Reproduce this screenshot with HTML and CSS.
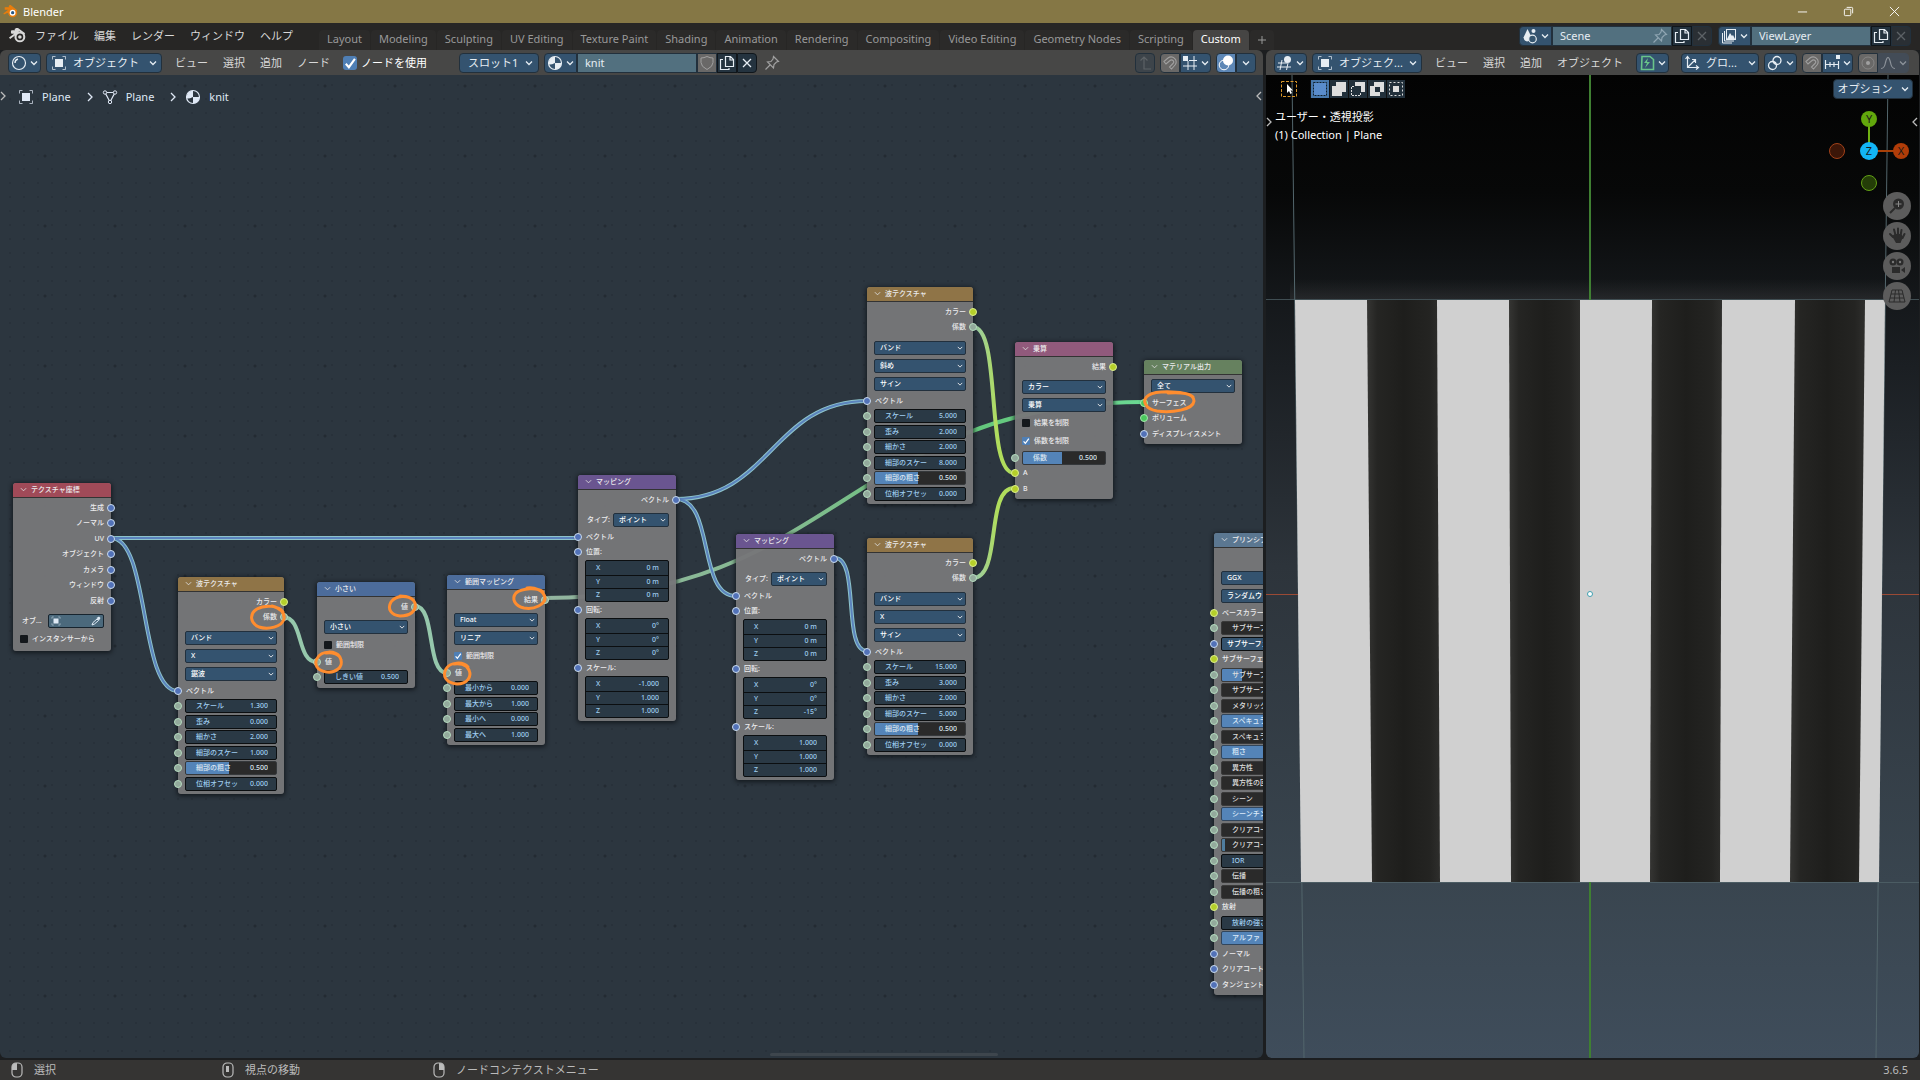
FILE: index.html
```html
<!DOCTYPE html>
<html lang="ja">
  <head>
    <meta charset="UTF-8" />
    <meta name="viewport" content="width=device-width, initial-scale=1.0" />
    <title>Blender</title>
    <link rel="stylesheet" href="styles.css">
  </head>
  <body>
    <svg class="defs" width="0" height="0">
      <symbol id="i-logo" viewBox="0 0 20 16"><path d="M1 11 L9 5 H3.500 V3.500 H10 L7.500 1.500 L9 .5 L17 6.500" fill="none" stroke="currentColor" stroke-width="2" stroke-linejoin="round"/><circle cx="12" cy="9.500" r="4.700" fill="none" stroke="currentColor" stroke-width="2.200"/><circle cx="12" cy="9.500" r="1.900" fill="currentColor"/></symbol>
      <symbol id="i-object" viewBox="0 0 16 16"><path d="M4.500 1.500h-3v3M11.500 1.500h3v3M4.500 14.500h-3v-3M11.500 14.500h3v-3" fill="none" stroke="currentColor" opacity=".7"/><rect x="4" y="4" width="8" height="8" fill="currentColor"/></symbol>
      <symbol id="i-sphere" viewBox="0 0 16 16"><circle cx="8" cy="8" r="6.500" fill="none" stroke="currentColor" stroke-width="1.200"/><path d="M4 8a4 4 0 0 1 3-4" fill="none" stroke="currentColor" stroke-width="1.400"/></symbol>
      <symbol id="i-material" viewBox="0 0 16 16"><circle cx="8" cy="8" r="6.500" fill="none" stroke="currentColor" stroke-width="1.200"/><path d="M8 1.500a6.500 6.500 0 0 0-6 8q2 .5 6-1.500zM8 8h6.500a6.500 6.500 0 0 1-6.500 6.500z" fill="currentColor"/></symbol>
      <symbol id="i-mesh" viewBox="0 0 16 16"><path d="M3 3.500h10L8 13z" fill="none" stroke="currentColor" stroke-width="1.200"/><g fill="#2c353e" stroke="currentColor"><circle cx="3" cy="3.500" r="1.700"/><circle cx="13" cy="3.500" r="1.700"/><circle cx="8" cy="13" r="1.700"/></g></symbol>
      <symbol id="i-chev" viewBox="0 0 8 8"><path d="M1 2.500l3 3 3-3" fill="none" stroke="currentColor" stroke-width="1.300"/></symbol>
      <symbol id="i-right" viewBox="0 0 8 12"><path d="M2 2l4 4-4 4" fill="none" stroke="currentColor" stroke-width="1.300"/></symbol>
      <symbol id="i-shield" viewBox="0 0 16 16"><path d="M8 1.500q3 1.500 6 1.500v4.500q0 4-6 7-6-3-6-7V3q3 0 6-1.500z" fill="none" stroke="currentColor"/></symbol>
      <symbol id="i-copy" viewBox="0 0 16 16"><path d="M6.500 1.500h5l3 3v7h-8zM11 1.500V5h3.500" fill="none" stroke="currentColor" stroke-width="1.200"/><path d="M4 4.500H1.500v10h8.500V13" fill="none" stroke="currentColor" stroke-width="1.200"/></symbol>
      <symbol id="i-x" viewBox="0 0 16 16"><path d="M4 4l8 8M12 4l-8 8" stroke="currentColor" stroke-width="1.300"/></symbol>
      <symbol id="i-pin" viewBox="0 0 16 16"><path d="M9.500 1.500l5 5-2 .5-2.500 2.500-.5 3.500-6-6 3.500-.5L9 4zM6 10l-4.500 4.500" fill="none" stroke="currentColor" stroke-width="1.200"/></symbol>
      <symbol id="i-parent" viewBox="0 0 16 16"><path d="M14 14H7V2M3.500 5.500L7 2l3.500 3.500" fill="none" stroke="currentColor" stroke-width="1.200"/></symbol>
      <symbol id="i-magnet" viewBox="0 0 16 16"><path d="M2 6.500L6 3a5 5 0 0 1 7 7l-3.500 4-2-2L11 8.500a2 2 0 0 0-3-3L4 9z" fill="none" stroke="currentColor" stroke-width="1.100"/></symbol>
      <symbol id="i-snapgrid" viewBox="0 0 16 16"><path d="M6 6v9M12 1v14M1 11h14M7 5.500h8" stroke="currentColor"/><rect x="1" y="1" width="5" height="5" fill="currentColor"/></symbol>
      <symbol id="i-overlay" viewBox="0 0 16 16"><circle cx="10" cy="5.500" r="5" fill="currentColor"/><circle cx="6" cy="10" r="4.800" fill="none" stroke="currentColor"/></symbol>
      <symbol id="i-scene" viewBox="0 0 16 16"><path d="M5.500 1l4 8q-.5 4-4.500 4.500-3-.5-3.500-4z" fill="currentColor"/><circle cx="11.500" cy="3" r="2" fill="currentColor"/><circle cx="10.500" cy="11" r="3.800" fill="#35556f" stroke="currentColor" stroke-width="1.200"/></symbol>
      <symbol id="i-layers" viewBox="0 0 16 16"><path d="M1.500 5v10H11M3.500 3v10H13" fill="none" stroke="currentColor"/><rect x="5.500" y="1.500" width="9" height="10" fill="none" stroke="currentColor"/><path d="M6 11l3-6 2 3 1-1 2 4z" fill="currentColor"/></symbol>
      <symbol id="i-view3d" viewBox="0 0 16 16"><path d="M1 8h9M0 12h14M5 5L3 15M11 8l-1.500 7" stroke="currentColor"/><circle cx="10.500" cy="4.500" r="3.500" fill="currentColor"/></symbol>
      <symbol id="i-pivot" viewBox="0 0 16 16"><path d="M3 1.500h8l3.500 3v10h-12z" fill="none" stroke="#69c48a" stroke-width="1.600"/><path d="M9 3L5 8h3l-2 5 5-6H8z" fill="#69c48a"/></symbol>
      <symbol id="i-axes" viewBox="0 0 16 16"><path d="M3.500 2v10.500H14M3.500 12.500L11 5M1.500 4l2-2.500 2 2.500M8 4.500h3.500V8M12 10.500l2.500 2-2.500 2" fill="none" stroke="currentColor" stroke-width="1.200"/></symbol>
      <symbol id="i-link" viewBox="0 0 16 16"><circle cx="10" cy="5.500" r="4" fill="none" stroke="currentColor" stroke-width="1.300"/><circle cx="5.500" cy="10.500" r="4" fill="none" stroke="currentColor" stroke-width="1.300"/><circle cx="8" cy="8" r="1.300" fill="currentColor"/></symbol>
      <symbol id="i-incr" viewBox="0 0 16 16"><path d="M1.500 5v9M6 7v5M10 7v5M14.500 6v8M1.500 9.500h13" stroke="currentColor" stroke-width="1.200"/><rect x="12" y="0" width="4" height="4" fill="currentColor"/></symbol>
      <symbol id="i-prop" viewBox="0 0 16 16"><circle cx="8" cy="8" r="6" fill="none" stroke="currentColor" opacity=".5"/><circle cx="8" cy="8" r="2" fill="currentColor"/></symbol>
      <symbol id="i-curve" viewBox="0 0 16 16"><path d="M1 13.500q3.500 0 4.500-6 2.500-10 5 0 1 6 4.500 6" fill="none" stroke="currentColor" stroke-width="1.200"/></symbol>
      <symbol id="i-mouse" viewBox="0 0 12 16"><rect x="1" y="1" width="10" height="14" rx="4" fill="none" stroke="currentColor" stroke-width="1.200"/></symbol>
      <symbol id="i-drop" viewBox="0 0 10 10"><path d="M1 9l1-2.500L6 3l1.500 1.500L3.500 8z" fill="none" stroke="currentColor"/><path d="M5.500 2l2.500 2.500 1.500-2.500-1.500-1.500z" fill="currentColor"/></symbol>
    </svg>

    <div class="titlebar">
      <svg class="logo" viewBox="0 0 20 16"><path d="M1 11L9 5H3V3.500h7L8 1.500 9 .5l8 6.500" fill="#e87d0d" stroke="#e87d0d" stroke-width="1.500"/><circle cx="12" cy="9.500" r="5.500" fill="#e87d0d"/><circle cx="12" cy="9.500" r="3.600" fill="#fff"/><circle cx="12" cy="9.500" r="2" fill="#265787"/></svg>
      <span class="title">Blender</span>
      <button class="win" aria-label="minimize"><svg viewBox="0 0 12 12"><path d="M1 6.500h10" stroke="#fff"/></svg></button>
      <button class="win" aria-label="restore"><svg viewBox="0 0 12 12"><rect x="1.500" y="3.500" width="7" height="7" rx="1" fill="none" stroke="#fff"/><path d="M4 1.500h5.500q1 0 1 1V8" fill="none" stroke="#fff"/></svg></button>
      <button class="win" aria-label="close"><svg viewBox="0 0 12 12"><path d="M1 1l10 10M11 1L1 11" stroke="#fff"/></svg></button>
    </div>

    <div class="topbar">
      <svg class="applogo"><use href="#i-logo"/></svg>
      <nav class="menu">
        <a href="#">ファイル</a><a href="#">編集</a><a href="#">レンダー</a><a href="#">ウィンドウ</a><a href="#">ヘルプ</a>
      </nav>
      <nav class="tabs">
        <a href="#">Layout</a><a href="#">Modeling</a><a href="#">Sculpting</a><a href="#">UV Editing</a><a href="#">Texture Paint</a><a href="#">Shading</a><a href="#">Animation</a><a href="#">Rendering</a><a href="#">Compositing</a><a href="#">Video Editing</a><a href="#">Geometry Nodes</a><a href="#">Scripting</a><a href="#" class="active">Custom</a><a href="#" class="add" aria-label="add workspace"><svg viewBox="0 0 8 8"><path d="M4 0v8M0 4h8" stroke="currentColor"/></svg></a>
      </nav>
      <div class="group scene">
        <button class="btn" aria-label="scene"><svg class="ic"><use href="#i-scene"/></svg><svg class="ch"><use href="#i-chev"/></svg></button>
        <input class="name" aria-label="scene name" value="Scene" />
        <svg class="ic inpin"><use href="#i-pin"/></svg>
        <button class="btn dark" aria-label="new scene"><svg class="ic"><use href="#i-copy"/></svg></button>
        <button class="btn off" aria-label="delete scene"><svg class="ic"><use href="#i-x"/></svg></button>
      </div>
      <div class="group scene">
        <button class="btn" aria-label="layer"><svg class="ic"><use href="#i-layers"/></svg><svg class="ch"><use href="#i-chev"/></svg></button>
        <input class="name" aria-label="layer name" value="ViewLayer" />
        <button class="btn dark" aria-label="new layer"><svg class="ic"><use href="#i-copy"/></svg></button>
        <button class="btn off" aria-label="delete layer"><svg class="ic"><use href="#i-x"/></svg></button>
      </div>
    </div>

    <div class="workspace">
      <section class="editor">
        <div class="header">
          <button class="btn" aria-label="editor"><svg class="ic"><use href="#i-sphere"/></svg><svg class="ch"><use href="#i-chev"/></svg></button>
          <button class="btn mode"><svg class="ic"><use href="#i-object"/></svg><span>オブジェクト</span><svg class="ch"><use href="#i-chev"/></svg></button>
          <nav class="menu">
            <a href="#">ビュー</a><a href="#">選択</a><a href="#">追加</a><a href="#">ノード</a>
          </nav>
          <label class="usenodes"><input type="checkbox" class="check" checked />ノードを使用</label>
          <button class="btn slot"><span>スロット1</span><svg class="ch"><use href="#i-chev"/></svg></button>
          <div class="group">
            <button class="btn" aria-label="material"><svg class="ic"><use href="#i-material"/></svg><svg class="ch"><use href="#i-chev"/></svg></button>
            <input class="name" aria-label="material name" value="knit" />
            <button class="btn grey" aria-label="fake user"><svg class="ic"><use href="#i-shield"/></svg></button>
            <button class="btn dark" aria-label="new material"><svg class="ic"><use href="#i-copy"/></svg></button>
            <button class="btn dark" aria-label="unlink"><svg class="ic"><use href="#i-x"/></svg></button>
          </div>
          <svg class="ic dim"><use href="#i-pin"/></svg>
          <div class="right">
            <button class="btn off" aria-label="parent"><svg class="ic"><use href="#i-parent"/></svg></button>
            <div class="group">
              <button class="btn grey" aria-label="snap"><svg class="ic"><use href="#i-magnet"/></svg></button>
              <button class="btn" aria-label="snap to"><svg class="ic"><use href="#i-snapgrid"/></svg><svg class="ch"><use href="#i-chev"/></svg></button>
            </div>
            <div class="group">
              <button class="btn lit" aria-label="overlays"><svg class="ic"><use href="#i-overlay"/></svg></button>
              <button class="btn more" aria-label="overlay options"><svg class="ch"><use href="#i-chev"/></svg></button>
            </div>
          </div>
        </div>

        <div class="canvas">
          <svg class="links">
            <defs>
              <linearGradient id="g-mix" gradientUnits="userSpaceOnUse" x1="973" y1="0" x2="1014" y2="0"><stop offset="0" stop-color="#98c9ae"/><stop offset=".6" stop-color="#b0dd5c"/></linearGradient>
              <linearGradient id="g-out" gradientUnits="userSpaceOnUse" x1="545" y1="0" x2="1143" y2="0"><stop offset="0" stop-color="#93b5a0"/><stop offset=".4" stop-color="#84ba90"/><stop offset=".7" stop-color="#63c57a"/><stop offset="1" stop-color="#6bd892"/></linearGradient>
            </defs>
            <g transform="translate(0 -75)" fill="none">
              <path class="out" d="M545 598C835 598 853 402 1143 402"/>
              <g class="edge">
                <path d="M111 538H577"/>
                <path d="M111 538C150 538 139 691 178 691"/>
                <path d="M676 499C770 499 773 401 867 401"/>
                <path d="M676 499C715 499 697 596 736 596"/>
                <path d="M835 558C860 558 842 651 867 651"/>
              </g>
              <g class="core">
                <path d="M111 538H577"/>
                <path d="M111 538C150 538 139 691 178 691"/>
                <path d="M676 499C770 499 773 401 867 401"/>
                <path d="M676 499C715 499 697 596 736 596"/>
                <path d="M835 558C860 558 842 651 867 651"/>
              </g>
              <g class="float">
                <path d="M283 617C304 617 296 662 317 662"/>
                <path d="M415 606C436 606 426 673 447 673"/>
              </g>
              <g class="mix">
                <path d="M973 327C1002 327 985 473 1014 473"/>
                <path d="M973 578C1002 578 985 488 1014 488"/>
              </g>
            </g>
          </svg>

          <div class="crumbs">
            <svg class="ic"><use href="#i-object"/></svg><span>Plane</span><svg class="sep"><use href="#i-right"/></svg>
            <svg class="ic"><use href="#i-mesh"/></svg><span>Plane</span><svg class="sep"><use href="#i-right"/></svg>
            <svg class="ic"><use href="#i-material"/></svg><span>knit</span>
          </div>

          <div class="node input" id="texcoord">
            <h2>テクスチャ座標</h2>
            <div class="rows">
              <div class="row out">生成<i class="sock vec"></i></div>
              <div class="row out">ノーマル<i class="sock vec"></i></div>
              <div class="row out">UV<i class="sock vec"></i></div>
              <div class="row out">オブジェクト<i class="sock vec"></i></div>
              <div class="row out">カメラ<i class="sock vec"></i></div>
              <div class="row out">ウィンドウ<i class="sock vec"></i></div>
              <div class="row out">反射<i class="sock vec"></i></div>
            </div>
            <div class="picks">
              <div class="pick split"><span>オブ...</span><button class="picker" aria-label="object"><svg><use href="#i-object"/></svg><svg><use href="#i-drop"/></svg></button></div>
              <label class="pick"><input type="checkbox" class="check" />インスタンサーから</label>
            </div>
          </div>

          <div class="node texture" id="wave1">
            <h2>波テクスチャ</h2>
            <div class="rows">
              <div class="row out">カラー<i class="sock color"></i></div>
              <div class="row out">係数<i class="sock float"></i></div>
            </div>
            <div class="picks">
              <div class="pick"><select aria-label="type"><option>バンド</option></select></div>
              <div class="pick"><select aria-label="direction"><option>X</option></select></div>
              <div class="pick"><select aria-label="profile"><option>鋸波</option></select></div>
            </div>
            <div class="rows">
              <div class="row"><i class="sock vec"></i>ベクトル</div>
              <div class="row"><i class="sock float"></i><label class="field"><span>スケール</span><input value="1.300" /></label></div>
              <div class="row"><i class="sock float"></i><label class="field"><span>歪み</span><input value="0.000" /></label></div>
              <div class="row"><i class="sock float"></i><label class="field"><span>細かさ</span><input value="2.000" /></label></div>
              <div class="row"><i class="sock float"></i><label class="field"><span>細部のスケー</span><input value="1.000" /></label></div>
              <div class="row"><i class="sock float"></i><label class="field slider"><span>細部の粗さ</span><input value="0.500" /></label></div>
              <div class="row"><i class="sock float"></i><label class="field"><span>位相オフセッ</span><input value="0.000" /></label></div>
            </div>
          </div>

          <div class="node convert" id="less">
            <h2>小さい</h2>
            <div class="rows">
              <div class="row out">値<i class="sock float"></i></div>
            </div>
            <div class="picks">
              <div class="pick"><select aria-label="operation"><option>小さい</option></select></div>
              <label class="pick"><input type="checkbox" class="check" />範囲制限</label>
            </div>
            <div class="rows">
              <div class="row"><i class="sock float"></i>値</div>
              <div class="row"><i class="sock float"></i><label class="field"><span>しきい値</span><input value="0.500" /></label></div>
            </div>
          </div>

          <div class="node convert" id="maprange">
            <h2>範囲マッピング</h2>
            <div class="rows">
              <div class="row out">結果<i class="sock float"></i></div>
            </div>
            <div class="picks">
              <div class="pick"><select aria-label="data type"><option>Float</option></select></div>
              <div class="pick"><select aria-label="interpolation"><option>リニア</option></select></div>
              <label class="pick"><input type="checkbox" class="check" checked />範囲制限</label>
            </div>
            <div class="rows">
              <div class="row"><i class="sock float"></i>値</div>
              <div class="row"><i class="sock float"></i><label class="field"><span>最小から</span><input value="0.000" /></label></div>
              <div class="row"><i class="sock float"></i><label class="field"><span>最大から</span><input value="1.000" /></label></div>
              <div class="row"><i class="sock float"></i><label class="field"><span>最小へ</span><input value="0.000" /></label></div>
              <div class="row"><i class="sock float"></i><label class="field"><span>最大へ</span><input value="1.000" /></label></div>
            </div>
          </div>

          <div class="node vector" id="mapping1">
            <h2>マッピング</h2>
            <div class="rows">
              <div class="row out">ベクトル<i class="sock vec"></i></div>
            </div>
            <div class="picks">
              <label class="pick split"><span>タイプ:</span><select><option>ポイント</option></select></label>
            </div>
            <div class="rows">
              <div class="row"><i class="sock vec"></i>ベクトル</div>
              <div class="row"><i class="sock vec"></i>位置:</div>
            </div>
            <div class="xyz">
              <label><span>X</span><input value="0 m" /></label>
              <label><span>Y</span><input value="0 m" /></label>
              <label><span>Z</span><input value="0 m" /></label>
            </div>
            <div class="row"><i class="sock vec"></i>回転:</div>
            <div class="xyz">
              <label><span>X</span><input value="0°" /></label>
              <label><span>Y</span><input value="0°" /></label>
              <label><span>Z</span><input value="0°" /></label>
            </div>
            <div class="row"><i class="sock vec"></i>スケール:</div>
            <div class="xyz">
              <label><span>X</span><input value="-1.000" /></label>
              <label><span>Y</span><input value="1.000" /></label>
              <label><span>Z</span><input value="1.000" /></label>
            </div>
          </div>

          <div class="node vector" id="mapping2">
            <h2>マッピング</h2>
            <div class="rows">
              <div class="row out">ベクトル<i class="sock vec"></i></div>
            </div>
            <div class="picks">
              <label class="pick split"><span>タイプ:</span><select><option>ポイント</option></select></label>
            </div>
            <div class="rows">
              <div class="row"><i class="sock vec"></i>ベクトル</div>
              <div class="row"><i class="sock vec"></i>位置:</div>
            </div>
            <div class="xyz">
              <label><span>X</span><input value="0 m" /></label>
              <label><span>Y</span><input value="0 m" /></label>
              <label><span>Z</span><input value="0 m" /></label>
            </div>
            <div class="row"><i class="sock vec"></i>回転:</div>
            <div class="xyz">
              <label><span>X</span><input value="0°" /></label>
              <label><span>Y</span><input value="0°" /></label>
              <label><span>Z</span><input value="-15°" /></label>
            </div>
            <div class="row"><i class="sock vec"></i>スケール:</div>
            <div class="xyz">
              <label><span>X</span><input value="1.000" /></label>
              <label><span>Y</span><input value="1.000" /></label>
              <label><span>Z</span><input value="1.000" /></label>
            </div>
          </div>

          <div class="node texture" id="wave2">
            <h2>波テクスチャ</h2>
            <div class="rows">
              <div class="row out">カラー<i class="sock color"></i></div>
              <div class="row out">係数<i class="sock float"></i></div>
            </div>
            <div class="picks">
              <div class="pick"><select aria-label="type"><option>バンド</option></select></div>
              <div class="pick"><select aria-label="direction"><option>斜め</option></select></div>
              <div class="pick"><select aria-label="profile"><option>サイン</option></select></div>
            </div>
            <div class="rows">
              <div class="row"><i class="sock vec"></i>ベクトル</div>
              <div class="row"><i class="sock float"></i><label class="field"><span>スケール</span><input value="5.000" /></label></div>
              <div class="row"><i class="sock float"></i><label class="field"><span>歪み</span><input value="2.000" /></label></div>
              <div class="row"><i class="sock float"></i><label class="field"><span>細かさ</span><input value="2.000" /></label></div>
              <div class="row"><i class="sock float"></i><label class="field"><span>細部のスケー</span><input value="8.000" /></label></div>
              <div class="row"><i class="sock float"></i><label class="field slider"><span>細部の粗さ</span><input value="0.500" /></label></div>
              <div class="row"><i class="sock float"></i><label class="field"><span>位相オフセッ</span><input value="0.000" /></label></div>
            </div>
          </div>

          <div class="node texture" id="wave3">
            <h2>波テクスチャ</h2>
            <div class="rows">
              <div class="row out">カラー<i class="sock color"></i></div>
              <div class="row out">係数<i class="sock float"></i></div>
            </div>
            <div class="picks">
              <div class="pick"><select aria-label="type"><option>バンド</option></select></div>
              <div class="pick"><select aria-label="direction"><option>X</option></select></div>
              <div class="pick"><select aria-label="profile"><option>サイン</option></select></div>
            </div>
            <div class="rows">
              <div class="row"><i class="sock vec"></i>ベクトル</div>
              <div class="row"><i class="sock float"></i><label class="field"><span>スケール</span><input value="15.000" /></label></div>
              <div class="row"><i class="sock float"></i><label class="field"><span>歪み</span><input value="3.000" /></label></div>
              <div class="row"><i class="sock float"></i><label class="field"><span>細かさ</span><input value="2.000" /></label></div>
              <div class="row"><i class="sock float"></i><label class="field"><span>細部のスケー</span><input value="5.000" /></label></div>
              <div class="row"><i class="sock float"></i><label class="field slider"><span>細部の粗さ</span><input value="0.500" /></label></div>
              <div class="row"><i class="sock float"></i><label class="field"><span>位相オフセッ</span><input value="0.000" /></label></div>
            </div>
          </div>

          <div class="node mixer" id="multiply">
            <h2>乗算</h2>
            <div class="rows">
              <div class="row out">結果<i class="sock color"></i></div>
            </div>
            <div class="picks">
              <div class="pick"><select aria-label="data type"><option>カラー</option></select></div>
              <div class="pick"><select aria-label="blend"><option>乗算</option></select></div>
              <label class="pick"><input type="checkbox" class="check" />結果を制限</label>
              <label class="pick"><input type="checkbox" class="check" checked />係数を制限</label>
            </div>
            <div class="rows">
              <div class="row"><i class="sock float"></i><label class="field slider"><span>係数</span><input value="0.500" /></label></div>
              <div class="row"><i class="sock color"></i>A</div>
              <div class="row"><i class="sock color"></i>B</div>
            </div>
          </div>

          <div class="node output" id="material">
            <h2>マテリアル出力</h2>
            <div class="pick"><select aria-label="target"><option>全て</option></select></div>
            <div class="rows">
              <div class="row"><i class="sock shader"></i>サーフェス</div>
              <div class="row"><i class="sock shader"></i>ボリューム</div>
              <div class="row"><i class="sock vec"></i>ディスプレイスメント</div>
            </div>
          </div>

          <div class="node shading" id="principled">
            <h2>プリンシプル</h2>
            <div class="rows"><div class="row"></div></div>
            <div class="picks">
              <div class="pick"><select aria-label="distribution"><option>GGX</option></select></div>
              <div class="pick"><select aria-label="subsurface method"><option>ランダムウォーク</option></select></div>
            </div>
            <div class="rows">
              <div class="row"><i class="sock color"></i>ベースカラー</div>
              <div class="row"><i class="sock float"></i><button class="field plain">サブサーフェ</button></div>
              <div class="row"><i class="sock vec"></i><button class="field drop">サブサーフェ</button></div>
              <div class="row"><i class="sock color"></i>サブサーフェス</div>
              <div class="row"><i class="sock float"></i><button class="field plain part">サブサーフェ</button></div>
              <div class="row"><i class="sock float"></i><button class="field plain">サブサーフェ</button></div>
              <div class="row"><i class="sock float"></i><button class="field plain">メタリック</button></div>
              <div class="row"><i class="sock float"></i><button class="field full">スペキュラー</button></div>
              <div class="row"><i class="sock float"></i><button class="field plain">スペキュラー</button></div>
              <div class="row"><i class="sock float"></i><button class="field full">粗さ</button></div>
              <div class="row"><i class="sock float"></i><button class="field plain">異方性</button></div>
              <div class="row"><i class="sock float"></i><button class="field plain">異方性の回転</button></div>
              <div class="row"><i class="sock float"></i><button class="field plain">シーン</button></div>
              <div class="row"><i class="sock float"></i><button class="field full">シーンチント</button></div>
              <div class="row"><i class="sock float"></i><button class="field plain">クリアコート</button></div>
              <div class="row"><i class="sock float"></i><button class="field plain sliver">クリアコート</button></div>
              <div class="row"><i class="sock float"></i><button class="field">IOR</button></div>
              <div class="row"><i class="sock float"></i><button class="field plain">伝播</button></div>
              <div class="row"><i class="sock float"></i><button class="field plain">伝播の粗さ</button></div>
              <div class="row"><i class="sock color"></i>放射</div>
              <div class="row"><i class="sock float"></i><button class="field">放射の強さ</button></div>
              <div class="row"><i class="sock float"></i><button class="field full">アルファ</button></div>
              <div class="row"><i class="sock vec"></i>ノーマル</div>
              <div class="row"><i class="sock vec"></i>クリアコート</div>
              <div class="row"><i class="sock vec"></i>タンジェント</div>
            </div>
          </div>

          <!-- hand-drawn rings round the connected sockets -->
          <svg class="rings">
            <g transform="translate(0 -75)">
              <path d="M283 612C279 605 264 605 257 609C249 614 250 623 259 627C268 630 282 627 284 619C285 612 279 608 272 606"/>
              <path d="M413 600C408 595 396 595 391 602C387 609 391 615 400 616C410 616 417 611 415 603C413 597 405 596 400 596"/>
              <path d="M340 657C335 650 322 651 318 657C313 664 317 671 327 672C336 673 343 667 341 660C340 654 332 652 326 653"/>
              <path d="M543 592C538 587 522 588 516 593C511 599 515 606 524 608C535 610 545 604 545 598C544 590 534 587 527 588"/>
              <path d="M468 667C463 661 450 662 446 669C442 676 446 683 457 684C467 684 472 677 469 670C466 664 459 663 454 664"/>
              <path d="M1193 397C1188 391 1157 390 1149 395C1141 400 1145 409 1157 411C1172 413 1193 410 1194 401C1194 393 1180 392 1168 393"/>
            </g>
          </svg>
          <svg class="fold left"><use href="#i-right"/></svg>
          <svg class="fold end"><use href="#i-right"/></svg>
          <div class="scroll"></div>
        </div>
      </section>

      <section class="editor">
        <div class="header tight">
          <button class="btn" aria-label="editor"><svg class="ic"><use href="#i-view3d"/></svg><svg class="ch"><use href="#i-chev"/></svg></button>
          <button class="btn mode"><svg class="ic"><use href="#i-object"/></svg><span>オブジェク...</span><svg class="ch"><use href="#i-chev"/></svg></button>
          <nav class="menu">
            <a href="#">ビュー</a><a href="#">選択</a><a href="#">追加</a><a href="#">オブジェクト</a>
          </nav>
          <button class="btn" aria-label="node tool"><svg class="ic"><use href="#i-pivot"/></svg><svg class="ch"><use href="#i-chev"/></svg></button>
          <div class="right">
            <button class="btn orient"><svg class="ic"><use href="#i-axes"/></svg><span>グロ...</span><svg class="ch"><use href="#i-chev"/></svg></button>
            <button class="btn" aria-label="pivot"><svg class="ic"><use href="#i-link"/></svg><svg class="ch"><use href="#i-chev"/></svg></button>
            <div class="group">
              <button class="btn grey" aria-label="snap"><svg class="ic"><use href="#i-magnet"/></svg></button>
              <button class="btn" aria-label="snap to"><svg class="ic"><use href="#i-incr"/></svg><svg class="ch"><use href="#i-chev"/></svg></button>
            </div>
            <div class="group">
              <button class="btn grey" aria-label="proportional"><svg class="ic"><use href="#i-prop"/></svg></button>
              <button class="btn faint" aria-label="falloff"><svg class="ic"><use href="#i-curve"/></svg><svg class="ch"><use href="#i-chev"/></svg></button>
            </div>
          </div>
        </div>

        <div class="view3d">
          <svg class="world" viewBox="0 0 653 983" preserveAspectRatio="none">
            <defs>
              <linearGradient id="g-sky" x1="0" y1="0" x2="0" y2="1"><stop offset="0" stop-color="#030303"/><stop offset=".12" stop-color="#070808"/><stop offset=".23" stop-color="#15181b"/><stop offset=".5" stop-color="#2d343b"/><stop offset=".82" stop-color="#39454f"/><stop offset="1" stop-color="#3f4d5b"/></linearGradient>
              <linearGradient id="g-dark" x1="0" y1="0" x2="1" y2="0"><stop offset="0" stop-color="#353533"/><stop offset=".14" stop-color="#252523"/><stop offset=".5" stop-color="#1e1e1c"/><stop offset=".86" stop-color="#242422"/><stop offset="1" stop-color="#2e2e2c"/></linearGradient>
              <linearGradient id="g-glow" x1="0" y1="0" x2="0" y2="1"><stop offset="0" stop-color="#555" stop-opacity="0"/><stop offset="1" stop-color="#555" stop-opacity=".25"/></linearGradient>
            </defs>
            <rect width="653" height="983" fill="url(#g-sky)"/>
            <rect x="24" y="204" width="596" height="20" fill="url(#g-glow)"/>
            <g stroke="#53666c" stroke-width="1">
              <path d="M26 0L38 983M622 0L610 983"/>
              <path d="M0 224.500H653M0 807.500H653" opacity=".7"/>
            </g>
            <rect y="519" width="653" height="1" fill="#9a4a35"/>
            <path d="M324 0V983" stroke="#3f7f32" stroke-width="2"/>
            <g fill="#d0d0d0"><path d="M29 225H619L613 807H35z"/></g>
            <g fill="url(#g-dark)">
              <path d="M101 225H171L174 807H106z"/>
              <path d="M243 225H314L314 807H245z"/>
              <path d="M386 225H456L454 807H384z"/>
              <path d="M529 225H599L593 807H524z"/>
            </g>
            <circle cx="324" cy="519" r="2.500" fill="#fff" stroke="#3f9fb0"/>
          </svg>

          <div class="tools">
            <button class="tool" aria-label="select"><svg viewBox="0 0 18 18"><rect x="1.500" y="1.500" width="15" height="15" fill="none" stroke="#d9962a" stroke-dasharray="3 1.500"/><path d="M7 4v9l2-2 1.500 3 1.500-1-1.500-2.500H13z" fill="#fff"/></svg></button>
            <div class="group">
              <button class="sel on" aria-label="set"><svg viewBox="0 0 16 16"><rect x="1.500" y="1.500" width="13" height="13" fill="#5a8ccb" stroke="#10202c" stroke-dasharray="2 1"/></svg></button>
              <button class="sel" aria-label="extend"><svg viewBox="0 0 16 16"><path d="M5 1h10v10h-4v4H1V5h4z" fill="#ddd"/></svg></button>
              <button class="sel" aria-label="subtract"><svg viewBox="0 0 16 16"><path d="M5 1h10v10h-4V5H5z" fill="#ddd"/><path d="M4 5.500H1.500v9h9V12" fill="none" stroke="#ddd" stroke-dasharray="2 1"/></svg></button>
              <button class="sel" aria-label="difference"><svg viewBox="0 0 16 16"><path d="M5 1h10v10h-4v4H1V5h4zM6 6v5h5V6z" fill="#ddd" fill-rule="evenodd"/></svg></button>
              <button class="sel" aria-label="intersect"><svg viewBox="0 0 16 16"><rect x="5" y="5" width="6" height="6" fill="#ddd"/><rect x="1.500" y="1.500" width="13" height="13" fill="none" stroke="#ddd" stroke-dasharray="2 2"/></svg></button>
            </div>
            <button class="btn options"><span>オプション</span><svg class="ch"><use href="#i-chev"/></svg></button>
          </div>
          <div class="info">
            <p>ユーザー・透視投影</p>
            <p>(1) Collection | Plane</p>
          </div>

          <svg class="gizmo" viewBox="0 0 80 84">
            <path d="M40 10V42" stroke="#6fb012" stroke-width="2"/><path d="M40 42H72" stroke="#a84008" stroke-width="2"/>
            <circle cx="40" cy="10" r="8" fill="#62a70c"/><circle cx="72" cy="42" r="8" fill="#b03c08"/>
            <circle cx="8" cy="42" r="7.500" fill="#3b1608" stroke="#a2421a"/><circle cx="40" cy="74" r="7.500" fill="#243d08" stroke="#62a015"/>
            <circle cx="40" cy="42" r="9" fill="#12b5f5"/>
            <text x="40" y="14">Y</text><text x="72" y="46">X</text><text x="40" y="46">Z</text>
          </svg>
          <div class="nav">
            <button aria-label="zoom"><svg viewBox="0 0 20 20"><circle cx="11.500" cy="8" r="5.500" fill="#2b2b2b"/><path d="M8 12l-5 5" stroke="#2b2b2b" stroke-width="2"/><path d="M11.500 5v6M8.500 8h6" stroke="#888"/></svg></button>
            <button aria-label="pan"><svg viewBox="0 0 20 20"><path d="M6 11l-3-3M8.500 9L7 3.500M11 9V2.500M13.500 10l1-6M15.500 12l2-4" stroke="#2b2b2b" stroke-width="2" stroke-linecap="round"/><path d="M5 10l3-2h6l2 3-2.500 6H9z" fill="#2b2b2b"/></svg></button>
            <button aria-label="camera"><svg viewBox="0 0 20 20"><g fill="#2b2b2b"><circle cx="6" cy="6" r="3.500"/><circle cx="13" cy="6" r="3.500"/><rect x="5" y="11" width="8" height="6"/><path d="M14 14l4-3v6z"/></g><circle cx="6" cy="6" r="1.200" fill="#777"/><circle cx="13" cy="6" r="1.200" fill="#777"/></svg></button>
            <button aria-label="grid"><svg viewBox="0 0 20 20"><path d="M5 4h10l3 12H2zM4 8h12M3 12h14M8.500 4L7 16M11.500 4L13 16" fill="none" stroke="#2b2b2b"/></svg></button>
          </div>
          <svg class="fold left lower"><use href="#i-right"/></svg>
          <svg class="fold end lower"><use href="#i-right"/></svg>
        </div>
      </section>
    </div>

    <footer class="status">
      <div class="hint"><svg><use href="#i-mouse"/><path d="M6 1v7H1V5q0-4 5-4z" fill="currentColor"/></svg>選択</div>
      <div class="hint"><svg><use href="#i-mouse"/><rect x="4" y="4" width="3" height="6" fill="currentColor"/></svg>視点の移動</div>
      <div class="hint"><svg><use href="#i-mouse"/><path d="M6 1v7h5V5q0-4-5-4z" fill="currentColor"/></svg>ノードコンテクストメニュー</div>
      <span class="version">3.6.5</span>
    </footer>
  </body>
</html>
```

FILE: styles.css
```css
* {
  margin: 0;
  padding: 0;
  box-sizing: border-box;
}
html,
body {
  height: 100%;
}
body {
  display: flex;
  flex-direction: column;
  overflow: hidden;
  background-color: #1c1e20;
  color: #d8d8d8;
  font-family: "Noto Sans", "Noto Sans CJK JP", sans-serif;
  font-size: 11px;
  line-height: 16px;
}
a {
  color: inherit;
  text-decoration: none;
}
button,
input,
select {
  font: inherit;
  color: inherit;
  border: none;
  outline: none;
  background: none;
}
svg {
  display: block;
  flex: none;
}
.defs {
  position: absolute;
}
.ic {
  width: 16px;
  height: 16px;
}
.ch {
  width: 8px;
  height: 8px;
}

/* title bar */
.titlebar {
  display: flex;
  align-items: center;
  height: 23px;
  flex: none;
  padding: 0 3px 0 2px;
  background-color: #857745;
  color: #fff;
}
.logo {
  width: 18px;
  height: 13px;
}
.title {
  flex: 1;
  padding-left: 3px;
}
.win {
  width: 46px;
  height: 20px;
  display: flex;
  align-items: center;
  justify-content: center;
}
.win svg {
  width: 11px;
  height: 11px;
}

/* top bar */
.topbar {
  display: flex;
  align-items: center;
  height: 27px;
  flex: none;
  padding-right: 9px;
  background-color: #272625;
}
.applogo {
  width: 20px;
  height: 15px;
  margin-left: 8px;
}
.menu {
  display: flex;
  gap: 15px;
  white-space: nowrap;
}
.topbar .menu {
  padding-left: 7px;
}
.topbar > :not(.tabs) {
  margin-bottom: 2px;
}
.tabs {
  display: flex;
  gap: 1px;
  align-self: flex-end;
  flex: 1;
  padding-left: 26px;
  color: #999;
}
.tabs a {
  height: 20px;
  padding: 1px 8px;
  background-color: #2b2a29;
  border-radius: 4px 4px 0 0;
  white-space: nowrap;
}
.tabs .active {
  background-color: #464544;
  color: #fff;
}
.tabs .add {
  display: flex;
  align-items: center;
}
.tabs .add svg {
  width: 8px;
  height: 8px;
}
.group {
  display: flex;
  align-items: center;
}
.btn {
  display: flex;
  align-items: center;
  justify-content: center;
  gap: 3px;
  height: 20px;
  padding: 0 2px;
  border: 1px solid #22303c;
  border-radius: 4px;
  background-color: #34536f;
  color: #e6edf3;
  white-space: nowrap;
}
.group .btn {
  border-radius: 0;
}
.group .btn:first-child {
  border-radius: 4px 0 0 4px;
}
.group .btn:last-child {
  border-radius: 0 4px 4px 0;
}
.group .btn:not(:first-child) {
  padding: 0 1px;
}
.btn.dark {
  background-color: #24333f;
  border-color: #10161b;
}
.btn.off {
  background-color: #2a2f34;
  color: #5d6266;
}
.btn.grey {
  background-color: #696867;
  color: #a0a0a0;
  padding: 0 1px;
}
.btn.lit {
  background-color: #5d87b6;
  color: #fff;
  padding: 0 1px;
}
.btn.faint {
  background-color: #434c57;
  border-color: #434c57;
  color: #8d939a;
}
.btn.more {
  width: 20px;
}
.name {
  height: 20px;
  width: 120px;
  padding: 0 7px;
  background-color: #52707f;
  border: 1px solid #22303c;
  color: #e6edf3;
}
.scene {
  margin-left: 6px;
}
.scene .inpin {
  margin-left: -20px;
  margin-right: 4px;
  color: #8fa5b2;
  position: relative;
}

/* editors */
.workspace {
  flex: 1;
  min-height: 0;
  display: grid;
  grid-template-columns: 1263fr 653fr;
  gap: 3px;
  padding-right: 1px;
}
.editor {
  display: flex;
  flex-direction: column;
  min-width: 0;
  overflow: hidden;
  border-radius: 6px;
}
.header {
  display: flex;
  align-items: center;
  height: 25px;
  flex: none;
  padding: 0 7px 0 8px;
  gap: 5px;
  background-color: #474746;
}
.header.tight {
  padding-right: 10px;
}
.header .menu {
  padding: 0 8px;
}
.mode {
  width: 116px;
  padding: 0 4px;
}
.tight .mode {
  width: 110px;
}
.mode span,
.slot span,
.orient span {
  flex: 1;
  text-align: left;
  padding-left: 3px;
}
.usenodes {
  display: flex;
  align-items: center;
  gap: 4px;
  color: #fff;
  white-space: nowrap;
}
.check {
  appearance: none;
  width: 8px;
  height: 8px;
  flex: none;
  background-color: #14181c;
  border-radius: 1px;
}
.check:checked {
  background: #4f7fb5 url("data:image/svg+xml,%3Csvg xmlns='http://www.w3.org/2000/svg' viewBox='0 0 10 10'%3E%3Cpath d='M2 5.500L4.200 8 8.500 2' fill='none' stroke='%23fff' stroke-width='1.500'/%3E%3C/svg%3E") center / contain;
}
.usenodes .check {
  width: 14px;
  height: 14px;
  border-radius: 3px;
}
.slot {
  width: 80px;
  margin-left: 27px;
  padding: 0 5px;
}
.header .dim {
  color: #a0a0a0;
  margin-left: 2px;
}
.right {
  display: flex;
  gap: 5px;
  margin-left: auto;
}
.right .btn.off {
  padding: 0 1px;
  background-color: #3d444a;
}
.orient {
  width: 78px;
}

/* node canvas */
.canvas {
  position: relative;
  flex: 1;
  overflow: hidden;
  background-color: #2c363f;
  background-image:
    radial-gradient(circle, #232b32 1px, transparent 2px),
    radial-gradient(circle, #28313a 1px, transparent 1px);
  background-size: 70px 70px, 14px 14px;
  background-position: 10px 46px, 3px 3px;
}
.links,
.rings {
  position: absolute;
  left: 0;
  top: 0;
  width: 100%;
  height: 100%;
}
.rings {
  pointer-events: none;
}
.rings path {
  fill: none;
  stroke: #ff8d2f;
  stroke-width: 3;
  stroke-linecap: round;
}
.links .out {
  stroke: url(#g-out);
  stroke-width: 4;
}
.edge {
  stroke: #8dc3cb;
  stroke-width: 4;
}
.core {
  stroke: #5b83bd;
  stroke-width: 2;
}
.links .float {
  stroke: #96c8ac;
  stroke-width: 4;
}
.mix {
  stroke: url(#g-mix);
  stroke-width: 4;
}
.crumbs {
  position: relative;
  display: flex;
  align-items: center;
  padding: 14px 18px;
  color: #dfe8f5;
}
.crumbs span {
  padding: 0 15px 0 8px;
}
.crumbs .sep {
  width: 8px;
  height: 12px;
  margin-right: 8px;
}
.scroll {
  position: absolute;
  bottom: 2px;
  left: 61%;
  width: 18%;
  height: 3px;
  border-radius: 2px;
  background-color: #3e464d;
}
.fold {
  position: absolute;
  top: 15px;
  width: 8px;
  height: 12px;
  color: #bbb;
}
.fold.left {
  left: -1px;
}
.fold.end {
  right: 0;
  transform: scaleX(-1);
}
.fold.lower {
  top: 41px;
}

.node {
  position: absolute;
  width: 98px;
  padding-bottom: 3px;
  background-color: rgba(119, 119, 121, 0.96);
  border-radius: 3px;
  box-shadow: 0 1px 4px 1px rgba(12, 16, 20, 0.75);
  font-size: 7px;
  font-weight: 500;
  line-height: 10px;
  color: #ebebed;
  white-space: nowrap;
}
.node h2 {
  height: 15px;
  margin-bottom: 2px;
  padding: 2px 0 0 18px;
  border-bottom: 1px solid #333;
  border-radius: 3px 3px 0 0;
  background: url("data:image/svg+xml,%3Csvg xmlns='http://www.w3.org/2000/svg' viewBox='0 0 8 8'%3E%3Cpath d='M1 2.500l3 3 3-3' fill='none' stroke='%23ddd'/%3E%3C/svg%3E") 7px 3px / 7px 7px no-repeat;
  font-size: 7px;
  font-weight: 500;
  line-height: 10px;
}
.input h2 {
  background-color: #a04a58;
}
.texture h2 {
  background-color: #8f7447;
}
.convert h2 {
  background-color: #4c6c9b;
}
.vector h2 {
  background-color: #6a5590;
}
.mixer h2 {
  background-color: #915a7c;
}
.output h2 {
  background-color: #66815f;
}
.shading h2 {
  background-color: #5b7791;
}
.texture {
  width: 106px;
}

#texcoord {
  left: 13px;
  top: 408px;
}
#wave1 {
  left: 178px;
  top: 502px;
}
#less {
  left: 317px;
  top: 507px;
}
#maprange {
  left: 447px;
  top: 500px;
}
#mapping1 {
  left: 578px;
  top: 400px;
}
#mapping2 {
  left: 736px;
  top: 459px;
}
#wave2 {
  left: 867px;
  top: 212px;
}
#wave3 {
  left: 867px;
  top: 463px;
}
#multiply {
  left: 1015px;
  top: 267px;
}
#material {
  left: 1144px;
  top: 285px;
}
#principled {
  left: 1214px;
  top: 458px;
}

.row {
  position: relative;
  display: flex;
  align-items: center;
  height: 15px;
  padding: 0 7px 0 8px;
}
.row:nth-child(even) {
  height: 16px;
}
.row.out {
  justify-content: flex-end;
}
.sock {
  position: absolute;
  left: -4px;
  width: 8px;
  height: 8px;
  border: 1px solid #cde;
  border-radius: 50%;
  background-color: #5272b8;
}
.out .sock {
  left: auto;
  right: -4px;
}
.sock.float {
  background-color: #93aa9c;
  border-color: #b5dcc0;
}
.sock.color {
  background-color: #b5cf2a;
  border-color: #dcef90;
}
.sock.shader {
  background-color: #4cc85e;
  border-color: #a5e8ae;
}
.picks {
  padding-top: 4px;
}
.pick {
  display: flex;
  align-items: center;
  height: 18px;
  padding: 0 7px;
  gap: 4px;
}
.node select {
  appearance: none;
  flex: 1;
  min-width: 0;
  height: 14px;
  padding: 0 5px;
  border: 1px solid #22303d;
  border-radius: 2px;
  background: #34536f url("data:image/svg+xml,%3Csvg xmlns='http://www.w3.org/2000/svg' viewBox='0 0 8 8'%3E%3Cpath d='M1 2.500l3 3 3-3' fill='none' stroke='%23eee' stroke-width='1.200'/%3E%3C/svg%3E") right 2px center / 6px 6px no-repeat;
  color: #fff;
}
.split span {
  width: 25px;
  padding-left: 2px;
}
.split {
  gap: 3px;
}
.picker {
  flex: 1;
  display: flex;
  align-items: center;
  justify-content: space-between;
  height: 14px;
  padding: 0 2px;
  border: 1px solid #17242e;
  border-radius: 2px;
  background-color: #4b697c;
  color: #dfeaf5;
}
.picker svg {
  width: 10px;
  height: 10px;
}
.field {
  display: flex;
  align-items: center;
  flex: 1;
  min-width: 0;
  height: 14px;
  margin-left: -1px;
  padding: 0 8px 0 10px;
  border: 1px solid #0b0e10;
  border-radius: 2px;
  background-color: #2a3945;
  color: #9fcdf0;
}
.field span {
  flex: none;
}
.field input {
  flex: 1;
  width: 0;
  min-width: 0;
  text-align: right;
}
.field.slider {
  border-color: #35383b;
  background: linear-gradient(90deg, #5484b8 48%, #2a2a2a 48%);
  color: #dce6f0;
}
.field.plain {
  background-color: #2a2a2a;
  border-color: #3a3a3a;
  color: #ddd;
}
.field.part {
  background-image: linear-gradient(90deg, #5484b8 20px, transparent 20px);
}
.field.sliver {
  background-image: linear-gradient(90deg, #4f7d9e 3px, transparent 3px);
}
.field.full {
  background-color: #5484b8;
  border-color: #32465c;
  color: #dcebfa;
}
.field.drop {
  background-color: #34536f;
  color: #fff;
  padding-left: 5px;
}
.xyz {
  margin: 0 7px;
  border: 1px solid #0b0e10;
  border-radius: 2px;
  background-color: #2a3945;
  color: #9fcdf0;
}
.xyz label {
  display: flex;
  align-items: center;
  height: 14px;
  padding: 0 9px 0 10px;
}
.xyz label:not(:first-child) {
  height: 13px;
  border-top: 1px solid #0b0e10;
}
.xyz input {
  flex: 1;
  width: 0;
  min-width: 0;
  text-align: right;
}

/* 3d view */
.view3d {
  position: relative;
  flex: 1;
  min-height: 0;
}
.world {
  position: absolute;
  width: 100%;
  height: 100%;
}
.tools {
  position: relative;
  display: flex;
  align-items: center;
  gap: 12px;
  padding: 4px 6px 0 14px;
}
.tool,
.tool svg {
  width: 18px;
  height: 18px;
}
.sel {
  width: 19px;
  height: 18px;
  padding: 1px;
  background-color: #22303b;
  border-left: 1px solid #111;
}
.sel.on {
  background-color: #4878ab;
}
.sel svg {
  width: 16px;
  height: 16px;
}
.options {
  margin-left: auto;
  width: 80px;
  gap: 8px;
}
.info {
  position: relative;
  padding: 9px;
  color: #fff;
}
.info p {
  line-height: 18px;
}
.gizmo {
  position: absolute;
  right: 10px;
  top: 34px;
  width: 80px;
  height: 84px;
  fill: #1a1a1a;
}
.gizmo text {
  font-size: 11px;
  text-anchor: middle;
}
.nav {
  position: absolute;
  right: 8px;
  top: 117px;
  display: flex;
  flex-direction: column;
  gap: 2px;
}
.nav button {
  width: 28px;
  height: 28px;
  padding: 4px;
  border-radius: 50%;
  background-color: #5c5c5c;
}

/* status bar */
.status {
  display: flex;
  align-items: center;
  flex: none;
  height: 20px;
  margin-top: 2px;
  padding: 0 12px 0 11px;
  background-color: #353433;
  color: #bbb;
}
.hint {
  display: flex;
  align-items: center;
  gap: 11px;
  width: 211px;
}
.hint:nth-child(3) {
  width: auto;
}
.hint svg {
  width: 12px;
  height: 16px;
}
.version {
  margin-left: auto;
}
```
